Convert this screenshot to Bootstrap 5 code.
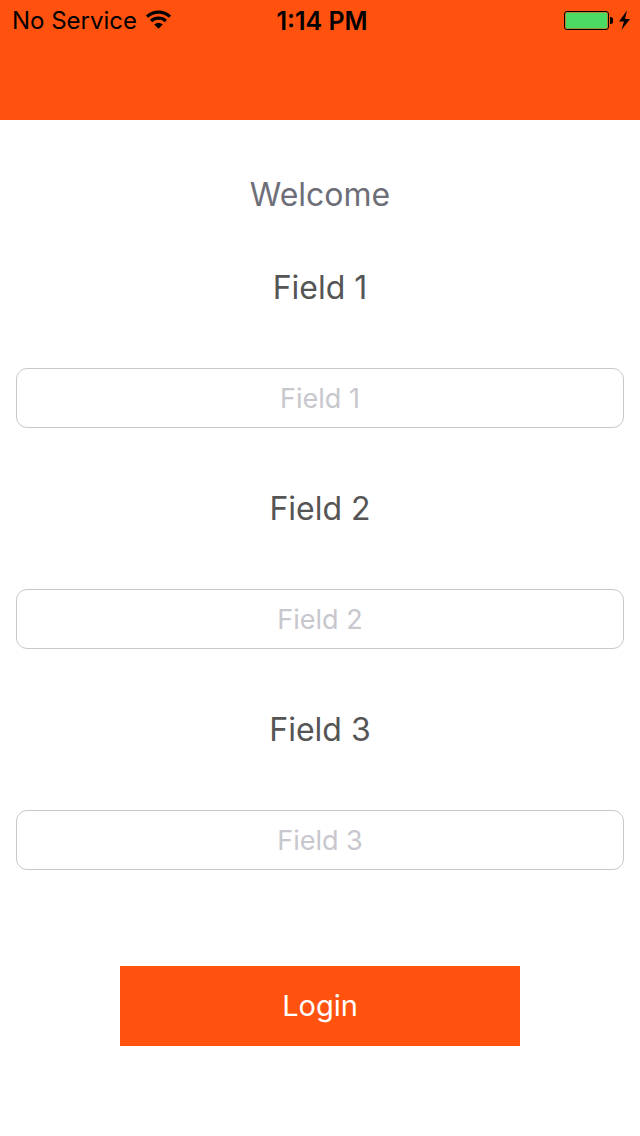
<!DOCTYPE html>
<html lang="en">
<head>
<meta charset="utf-8">
<meta name="viewport" content="width=device-width, initial-scale=1">
<title>Welcome</title>
<link href="https://cdn.jsdelivr.net/npm/bootstrap@5.3.0/dist/css/bootstrap.min.css" rel="stylesheet">
<style>
  :root { --brand: #ff520e; }
  body { font-family: Inter, Roboto, sans-serif; background: #fff; }
  .topbar { background: var(--brand); color: #000; min-height: 120px; }
  .status { font-size: 24px; line-height: 42px; padding: 0 8px 0 12px; }
  .status-time { font-weight: 600; font-size: 25px; }
  .status svg { display: block; }
  .login-form { padding: 54px 16px 90px; }
  .title, .field-label { font-size: 32px; line-height: 41px; font-weight: 400; text-align: center; margin: 0; }
  .title { color: #6d6e78; margin-bottom: 52px; }
  .field-label { color: #555; }
  .field-group { display: flex; flex-direction: column; gap: 60px; margin-bottom: 60px; }
  .field-group .form-control { height: 60px; font-size: 27px; border: 1px solid #c8c8c8; border-radius: 11px; text-align: center; }
  .field-group .form-control::placeholder { color: #c7c7cd; }
  .btn-login { --bs-btn-bg: var(--brand); --bs-btn-color: #fff; --bs-btn-hover-bg: #e6470a; --bs-btn-hover-color: #fff; --bs-btn-active-bg: #cc3f08; --bs-btn-active-color: #fff;
    width: 400px; max-width: 100%; height: 80px; font-size: 29px; margin-top: 36px; }
</style>
</head>
<body>
<header class="topbar">
  <div class="status row g-0 align-items-center">
    <div class="col d-flex align-items-center gap-2">
      <span>No Service</span>
      <svg width="28" height="22" viewBox="3 0 28 22" fill="none" stroke="#000" stroke-width="3.2" aria-label="Wi-Fi">
        <path d="M5 6.6C11.8 .6 21.2 .6 28 6.6"/>
        <path d="M9.1 11C13.4 7.2 19.6 7.2 23.9 11"/>
        <path d="M12.2 14.4Q16.5 11.2 20.8 14.4L16.5 18.8Z" fill="#000" stroke="none"/>
      </svg>
    </div>
    <div class="col-auto status-time">1:14 PM</div>
    <div class="col d-flex align-items-center justify-content-end">
      <svg width="68" height="22" viewBox="0 0 68 22" aria-label="Battery charging">
        <rect x=".5" y="1.5" width="44" height="18" rx="2.5" fill="none" stroke="#000"/>
        <rect x="1.6" y="2.6" width="41.8" height="15.8" rx="1.5" fill="#4cd964"/>
        <path d="M46 7h.5a2.5 2.5 0 0 1 2.5 2.5v2a2.5 2.5 0 0 1-2.5 2.5H46z"/>
        <path d="M63 .5 55 11.5h5L57.5 20 66 9h-5z"/>
      </svg>
    </div>
  </div>
</header>
<main>
  <form class="login-form">
    <h1 class="title">Welcome</h1>
    <div class="field-group">
      <label class="field-label" for="field1">Field 1</label>
      <input class="form-control" type="text" id="field1" placeholder="Field 1">
    </div>
    <div class="field-group">
      <label class="field-label" for="field2">Field 2</label>
      <input class="form-control" type="text" id="field2" placeholder="Field 2">
    </div>
    <div class="field-group">
      <label class="field-label" for="field3">Field 3</label>
      <input class="form-control" type="text" id="field3" placeholder="Field 3">
    </div>
    <div class="d-flex justify-content-center">
      <button class="btn btn-login rounded-0 border-0" type="button">Login</button>
    </div>
  </form>
</main>
<script src="https://cdn.jsdelivr.net/npm/bootstrap@5.3.0/dist/js/bootstrap.bundle.min.js"></script>
</body>
</html>
